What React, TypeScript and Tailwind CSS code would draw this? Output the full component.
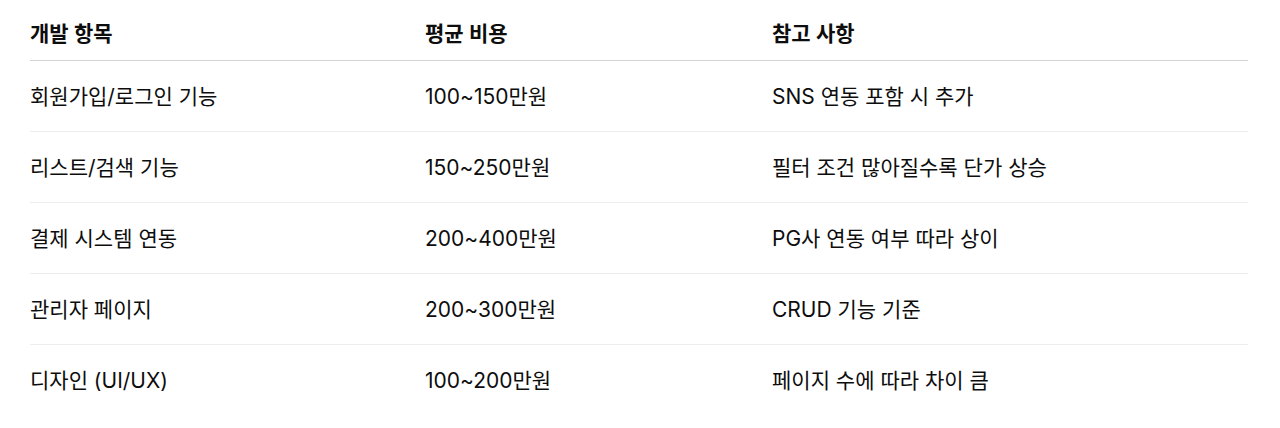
const rows = [
  { item: "회원가입/로그인 기능", cost: "100~150만원", note: "SNS 연동 포함 시 추가" },
  { item: "리스트/검색 기능", cost: "150~250만원", note: "필터 조건 많아질수록 단가 상승" },
  { item: "결제 시스템 연동", cost: "200~400만원", note: "PG사 연동 여부 따라 상이" },
  { item: "관리자 페이지", cost: "200~300만원", note: "CRUD 기능 기준" },
  { item: "디자인 (UI/UX)", cost: "100~200만원", note: "페이지 수에 따라 차이 큼" },
];

export default function App() {
  return (
    <div
      className="min-h-[428px] w-full bg-white px-[30px] pt-[7px] text-[#0d0d0d]"
      style={{ fontFamily: 'Inter, "Noto Sans CJK KR", sans-serif' }}
    >
      <div className="w-[1218px]">
        <div className="grid grid-cols-[395px_347px_1fr] border-b border-[#d4d4d4] py-3 text-[21px] font-semibold leading-[29px]">
          <div>개발 항목</div>
          <div>평균 비용</div>
          <div>참고 사항</div>
        </div>
        {rows.map((r, i) => (
          <div
            key={r.item}
            className={`grid h-[71px] grid-cols-[395px_347px_1fr] items-center text-[21px] leading-[29px] ${
              i < rows.length - 1 ? "border-b border-[#ededed]" : ""
            }`}
          >
            <div>{r.item}</div>
            <div>{r.cost}</div>
            <div>{r.note}</div>
          </div>
        ))}
      </div>
    </div>
  );
}
